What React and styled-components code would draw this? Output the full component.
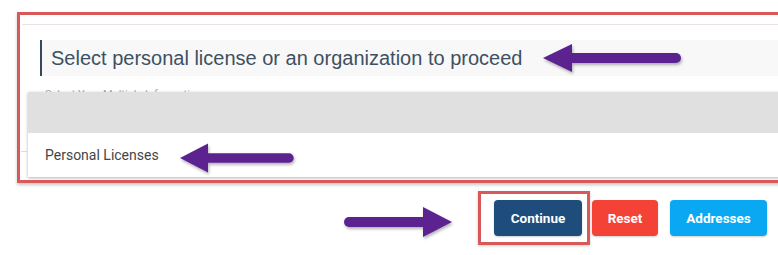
import React from "react";
import styled, { createGlobalStyle } from "styled-components";

const GlobalStyle = createGlobalStyle`
  html, body {
    margin: 0;
    padding: 0;
    background: #ffffff;
    overflow: hidden;
  }
  body {
    font-family: Roboto, "Liberation Sans", Arial, sans-serif;
  }
`;

const Page = styled.div`
  position: relative;
  width: 778px;
  height: 255px;
  padding: 12px 0 0 17px;
  box-sizing: border-box;
  overflow: hidden;
`;

const Frame = styled.div`
  width: 800px;
  height: 171px;
  box-sizing: border-box;
  border: 3px solid #d9585a;
  box-shadow: 0 2px 3px rgba(0, 0, 0, 0.22);
  padding-top: 9px;
  overflow: hidden;
`;

const Panel = styled.div`
  position: relative;
  border-top: 1px solid #ebe3e3;
  margin-left: 2px;
  padding: 15px 0 0 18px;
`;

const Heading = styled.h2`
  margin: 0;
  height: 36px;
  line-height: 36px;
  padding-left: 9px;
  border-left: 2px solid #34495e;
  background: #f8f8f8;
  font-family: "Liberation Sans", Arial, sans-serif;
  font-size: 20px;
  font-weight: 400;
  color: #3e5062;
`;

const Field = styled.div`
  position: relative;
  margin-top: 12px;
  padding-left: 5px;
`;

const Hint = styled.span`
  display: block;
  font-size: 11px;
  line-height: 13px;
  color: #aaaaaa;
`;

const Menu = styled.div`
  position: absolute;
  top: 4px;
  left: -12px;
  width: 800px;
  background: #ffffff;
  box-shadow: 0 1px 3px rgba(0, 0, 0, 0.3);
`;

const MenuHeader = styled.div`
  height: 41px;
  background: #e0e0e0;
`;

const MenuItem = styled.div`
  height: 44px;
  line-height: 44px;
  padding-left: 17px;
  font-size: 14px;
  color: #454545;
`;

const Tick = styled.span`
  position: absolute;
  left: -19px;
  top: 63px;
  width: 6px;
  height: 1px;
  background: #dddddd;
`;

const Actions = styled.div`
  display: flex;
  align-items: center;
  margin-top: 8px;
  padding-left: 461px;
`;

const Highlight = styled.div`
  box-sizing: border-box;
  width: 112px;
  height: 54px;
  border: 3px solid #d9585a;
  box-shadow: 0 1px 3px rgba(0, 0, 0, 0.2);
  padding: 6px 0 0 13px;
`;

const Button = styled.button`
  height: 36px;
  width: ${(p) => p.$w}px;
  margin-left: ${(p) => p.$gap || 0}px;
  border: none;
  border-radius: 4px;
  background: ${(p) => p.$bg};
  color: #ffffff;
  font-family: Roboto, "Liberation Sans", Arial, sans-serif;
  font-size: 13.5px;
  font-weight: 700;
  box-shadow: 0 1px 2px rgba(0, 0, 0, 0.2);
  cursor: pointer;
`;

const Overlay = styled.svg`
  position: absolute;
  left: 0;
  top: 0;
  pointer-events: none;
`;

// annotation arrows drawn over the screenshot
const arrows = [
  { tip: [543, 58], base: 572, half: 14, end: 676, thick: 10 },
  { tip: [180, 158], base: 208, half: 14.5, end: 289, thick: 9.5 },
  { tip: [452, 222], base: 423, half: 15, end: 349, thick: 10 },
];

const Arrow = ({ tip, base, half, end, thick }) => {
  const [tx, ty] = tip;
  return (
    <g filter="url(#shadow)">
      <line
        x1={base}
        y1={ty}
        x2={end}
        y2={ty}
        stroke="#5b2390"
        strokeWidth={thick}
        strokeLinecap="round"
      />
      <polygon fill="#5b2390" points={`${tx},${ty} ${base},${ty - half} ${base},${ty + half}`} />
    </g>
  );
};

export default function App() {
  return (
    <>
      <GlobalStyle />
      <Page>
        <Frame>
          <Panel>
            <Heading>Select personal license or an organization to proceed</Heading>
            <Field>
              <Hint>Select Your Multiple Information</Hint>
              <Tick />
              <Menu>
                <MenuHeader />
                <MenuItem>Personal Licenses</MenuItem>
              </Menu>
            </Field>
          </Panel>
        </Frame>
        <Actions>
          <Highlight>
            <Button $w={88} $bg="#1e4d7b">Continue</Button>
          </Highlight>
          <Button $w={66} $gap={2} $bg="#f44336">Reset</Button>
          <Button $w={97} $gap={12} $bg="#0aa8f2">Addresses</Button>
        </Actions>
        <Overlay width="778" height="255" viewBox="0 0 778 255">
          <defs>
            <filter id="shadow" x="-20%" y="-50%" width="140%" height="200%">
              <feDropShadow dx="1" dy="2" stdDeviation="1.5" floodColor="#000" floodOpacity="0.3" />
            </filter>
          </defs>
          {arrows.map((a, i) => (
            <Arrow key={i} {...a} />
          ))}
        </Overlay>
      </Page>
    </>
  );
}
